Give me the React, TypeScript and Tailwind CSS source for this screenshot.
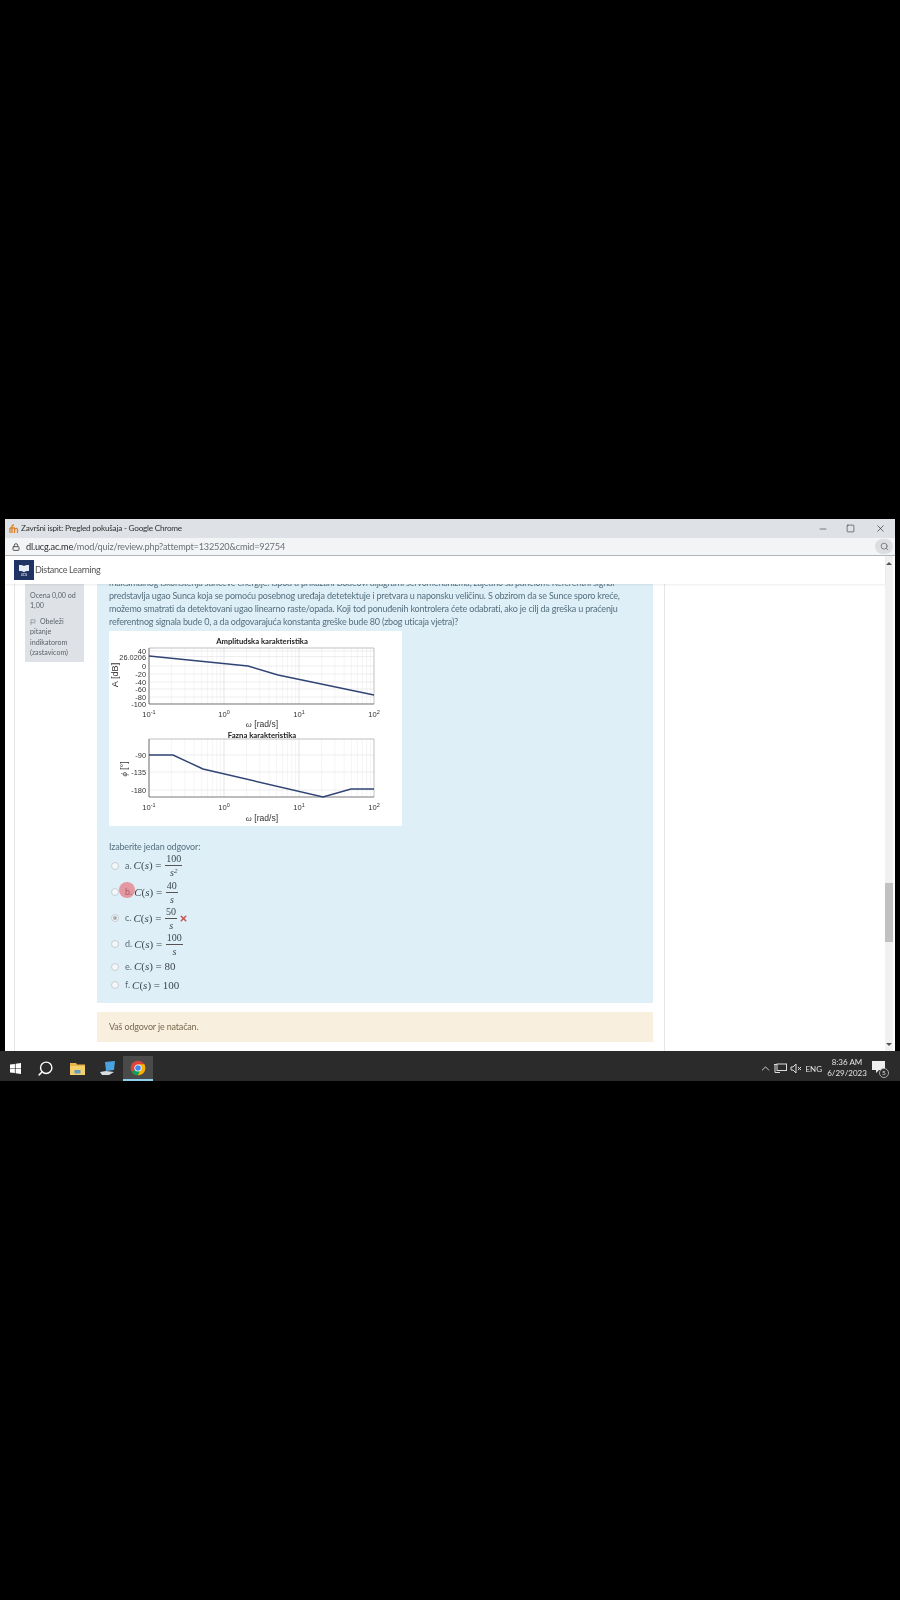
import React from "react";
import { Search, Lock, X, Minus, Square, ChevronUp, Flag } from "lucide-react";

const sans = "font-['Lato',sans-serif]";

function Frac({ n, d, sup }: { n: string; d: string; sup?: boolean }) {
  return (
    <span className="inline-flex flex-col items-center ml-[1px] mr-[4px] leading-[11px] text-[10px] text-[#3c464d]">
      <span className="px-[1px] border-b border-[#555] pb-[1px]">{n}</span>
      <span className="italic pt-[1px]">
        {d}
        {sup && <sup className="text-[7px] leading-none">2</sup>}
      </span>
    </span>
  );
}

function Radio({ checked }: { checked?: boolean }) {
  return (
    <span className="w-[8px] h-[8px] rounded-full border border-[#c9ced2] bg-[#f4f7f9] flex items-center justify-center mr-[6px] shrink-0">
      {checked && <span className="w-[4px] h-[4px] rounded-full bg-[#a9b0b5]" />}
    </span>
  );
}

function Option({ letter, eq, frac, wrong, h, checked }: { letter: string; eq: string; frac?: { n: string; d: string; sup?: boolean }; wrong?: boolean; h: string; checked?: boolean }) {
  return (
    <div className={`flex items-center pl-[2px] text-[#5d6b72] ${h}`}>
      <Radio checked={checked} />
      <span className="text-[9px] mr-[2px]">{letter}.</span>
      <span className="font-['Liberation_Serif',serif] text-[11px] flex items-center text-[#3c464d]">
        <span className="italic">C</span>(<span className="italic">s</span>)&nbsp;=&nbsp;{eq}
        {frac && <Frac {...frac} />}
      </span>
      {wrong && <X size={9} strokeWidth={4} className="text-[#c9504f] -ml-[2px]" />}
    </div>
  );
}

const decades = [0, 1, 2];
const logs = [1, 2, 3, 4, 5, 6, 7, 8, 9];
const xMinor: number[] = [];
decades.forEach((d) => logs.forEach((m) => xMinor.push(40 + 75 * (d + Math.log10(m)))));

function Axes({ top, bottom, yTicks, path }: { top: number; bottom: number; yTicks: { y: number; t: string }[]; path: string }) {
  return (
    <g>
      {xMinor.map((x, i) => (
        <line key={i} x1={x} x2={x} y1={top} y2={bottom} stroke={i % 9 === 0 ? "#d4d4d4" : "#eeeeee"} strokeWidth="0.6" />
      ))}
      {yTicks.map((k) => (
        <line key={k.t} x1="40" x2="265" y1={k.y} y2={k.y} stroke="#e2e2e2" strokeWidth="0.6" />
      ))}
      <path d={`M40 ${top}H265V${bottom}`} fill="none" stroke="#999" strokeWidth="0.6" />
      <path d={`M40 ${top}V${bottom}H265`} fill="none" stroke="#444" strokeWidth="0.7" />
      <polyline points={path} fill="none" stroke="#2f4474" strokeWidth="1.4" />
      {yTicks.map((k) => (
        <text key={k.t} x="37" y={k.y + 3} textAnchor="end" fontSize="7.4" fill="#333">{k.t}</text>
      ))}
      {[0, 1, 2, 3].map((d) => (
        <text key={d} x={40 + 75 * d} y={bottom + 13} textAnchor="middle" fontSize="7.6" fill="#333">
          10<tspan fontSize="5.5" dy="-3">{d === 0 ? "-1" : d - 1}</tspan>
        </text>
      ))}
    </g>
  );
}

function Chart() {
  return (
    <svg width="293" height="195" viewBox="0 0 293 195" className="bg-white block font-['Liberation_Sans',sans-serif]">
      <text x="153" y="13" textAnchor="middle" fontSize="7.7" fontWeight="bold" fill="#222" fontFamily="Lato">Amplitudska karakteristika</text>
      <Axes
        top={17}
        bottom={73}
        path="40,25 139,35 169,44 265,64"
        yTicks={[
          { y: 20, t: "40" },
          { y: 25.5, t: "26.0206" },
          { y: 35, t: "0" },
          { y: 43, t: "-20" },
          { y: 51, t: "-40" },
          { y: 58, t: "-60" },
          { y: 66, t: "-80" },
          { y: 73, t: "-100" },
        ]}
      />
      <text x="0" y="0" transform="translate(9,44) rotate(-90)" textAnchor="middle" fontSize="9.2" fill="#333">A [dB]</text>
      <text x="153" y="96" textAnchor="middle" fontSize="8.6" fill="#333"><tspan fontFamily="Liberation Serif" fontStyle="italic">ω</tspan> [rad/s]</text>
      <text x="153" y="107" textAnchor="middle" fontSize="7.7" fontWeight="bold" fill="#222" fontFamily="Lato">Fazna karakteristika</text>
      <Axes
        top={108}
        bottom={166}
        path="40,124 64,124 94,138 214,166 242,158 265,158"
        yTicks={[
          { y: 124, t: "-90" },
          { y: 141, t: "-135" },
          { y: 159, t: "-180" },
        ]}
      />
      <text x="0" y="0" transform="translate(18,138) rotate(-90)" textAnchor="middle" fontSize="8.6" fill="#333"><tspan fontFamily="Liberation Serif" fontStyle="italic">ϕ</tspan> [°]</text>
      <text x="153" y="190" textAnchor="middle" fontSize="8.6" fill="#333"><tspan fontFamily="Liberation Serif" fontStyle="italic">ω</tspan> [rad/s]</text>
    </svg>
  );
}

function Chrome() {
  return (
    <svg width="16" height="16" viewBox="0 0 24 24">
      <circle cx="12" cy="12" r="11" fill="#db4437" />
      <path d="M12 12 L2.5 17.5 A11 11 0 0 0 12 23 L21.5 17.5Z" fill="#0f9d58" />
      <path d="M12 23 A11 11 0 0 0 21.5 6.5 L12 6.5 L16 13Z" fill="#f4b400" />
      <circle cx="12" cy="12" r="5.4" fill="#fff" />
      <circle cx="12" cy="12" r="4.2" fill="#4285f4" />
    </svg>
  );
}

const lines = [
  "maksimalnog iskorištenja sunčeve energije. Ispod u prikazani Bodeovi dijagrami servomehanizma, zajedno sa panelom. Referentni signal",
  "predstavlja ugao Sunca koja se pomoću posebnog uređaja detetektuje i pretvara u naponsku veličinu. S obzirom da se Sunce sporo kreće,",
  "možemo smatrati da detektovani ugao linearno raste/opada. Koji tod ponuđenih kontrolera ćete odabrati, ako je cilj da greška u praćenju",
  "referentnog signala bude 0, a da odgovarajuća konstanta greške bude 80 (zbog uticaja vjetra)?",
];

export default function App() {
  return (
    <div className={`w-[900px] h-[1600px] bg-black pt-[519px] overflow-hidden ${sans}`}>
      <div className="blur-[0.4px]">
        <div className="ml-[5px] w-[890px] h-[532px] flex flex-col bg-white">
          {/* title bar */}
          <div className="h-[19px] bg-[#dee1e6] flex items-center text-[#333]">
            <svg width="10" height="10" viewBox="0 0 10 10" className="ml-[4px] mr-[1px]">
              <path d="M1 9V4M1 4h5M3 9V2.5Q3 1 5 1M5.5 9V5M5.5 5.5Q8.5 3 8.5 6V9" stroke="#d9822b" strokeWidth="1.3" fill="none" />
            </svg>
            <span className="text-[8.2px] tracking-[-0.23px] ml-[1px]">Završni ispit: Pregled pokušaja - Google Chrome</span>
            <div className="ml-auto flex items-center">
              <Minus size={10} strokeWidth={1.4} className="mr-[18px] text-[#333]" />
              <Square size={9} strokeWidth={1.6} className="mr-[20px] text-[#333]" />
              <X size={11} strokeWidth={1.5} className="mr-[9px] text-[#333]" />
            </div>
          </div>
          {/* address bar */}
          <div className="h-[18px] bg-[#f3f4f6] border-b border-[#b4b6b8] flex items-center">
            <Lock size={8} strokeWidth={3} className="ml-[7px] text-[#555]" />
            <span className="text-[9.2px] tracking-[-0.2px] ml-[6px] text-[#6b7177]"><span className="text-[#2a2d30]">dl.ucg.ac.me</span>/mod/quiz/review.php?attempt=132520&amp;cmid=92754</span>
            <span className="ml-auto mr-[2px] w-[18px] h-[15px] rounded-full bg-[#dcdee1] flex items-center justify-center">
              <Search size={9} className="text-[#666]" />
            </span>
          </div>
          {/* body */}
          <div className="flex-1 flex min-h-0">
            <div className="flex-1 flex flex-col min-w-0 relative">
              <div className="h-[28px] bg-white shadow-[0_1px_2px_rgba(0,0,0,0.08)] flex items-center relative z-10 shrink-0">
                <div className="ml-[9px] w-[20px] h-[20px] bg-[#1f3462] flex flex-col items-center justify-center">
                  <svg width="12" height="9" viewBox="0 0 12 9"><path d="M6 2Q4 .5 1 1v6q3-.5 5 1.2Q8 6.5 11 7V1Q8 .5 6 2Z" fill="#e8edf5" /></svg>
                  <span className="text-[3px] leading-[4px] text-white">UCG</span>
                </div>
                <span className="text-[9px] tracking-[-0.3px] text-[#555] ml-[1px]">Distance Learning</span>
              </div>
              <div className="flex-1 min-h-0 overflow-hidden">
                <div className="ml-[9px] w-[651px] h-full border-x border-[#e4e6e8] flex">
                  {/* sidebar */}
                  <div className="ml-[10px] w-[59px] h-[78px] bg-[#dee2e6] pl-[5px] pr-[3px] pt-[7px] text-[7.1px] leading-[10.4px] text-[#5b6368] shrink-0">
                    <div>Ocena 0,00 od 1,00</div>
                    <div className="mt-[5px]">
                      <Flag size={6} className="inline mr-[4px]" />Obeleži pitanje indikatorom (zastavicom)
                    </div>
                  </div>
                  {/* main */}
                  <div className="ml-[13px] w-[556px]">
                    <div className="bg-[#dfeff7] h-[419px] px-[12px] relative flow-root">
                      <div className="text-[9px] tracking-[-0.19px] leading-[13px] text-[#55707f] -mt-[8px] whitespace-nowrap">
                        {lines.map((l) => (
                          <div key={l}>{l}</div>
                        ))}
                      </div>
                      <div className="mt-[3px]">
                        <Chart />
                      </div>
                      <div className="text-[9px] tracking-[-0.16px] h-[13px] leading-[13px] text-[#55707f] mt-[14px] -mb-[1px]">Izaberite jedan odgovor:</div>
                      <Option letter="a" eq="" frac={{ n: "100", d: "s", sup: true }} h="h-[27px]" />
                      <Option letter="b" eq="" frac={{ n: "40", d: "s" }} h="h-[26px]" />
                      <Option letter="c" eq="" frac={{ n: "50", d: "s" }} wrong checked h="h-[26px]" />
                      <Option letter="d" eq="" frac={{ n: "100", d: "s" }} h="h-[26px]" />
                      <Option letter="e" eq="80" h="h-[19px]" />
                      <Option letter="f" eq="100" h="h-[18px]" />
                      <span className="absolute left-[22px] top-[298px] w-[16px] h-[16px] rounded-full bg-[#e8505b]/55" />
                    </div>
                    <div className="mt-[9px] h-[30px] bg-[#f8efdf] px-[12px] flex items-center text-[9px] tracking-[-0.16px] text-[#7a6a4f]">Vaš odgovor je natačan.</div>
                  </div>
                </div>
              </div>
            </div>
            {/* scrollbar */}
            <div className="w-[8px] mr-[2px] bg-[#f1f1f1] flex flex-col items-center">
              <span className="mt-[6px] border-x-[3px] border-x-transparent border-b-[3px] border-b-[#555]" />
              <span className="w-[8px] h-[59px] bg-[#c1c1c1] mt-[318px] shrink-0" />
              <span className="mt-auto mb-[5px] border-x-[3px] border-x-transparent border-t-[3px] border-t-[#555]" />
            </div>
          </div>
        </div>
        {/* taskbar */}
        <div className="h-[30px] pt-[5px] bg-[#2b2b2b] flex items-center text-[#e4e4e4]">
          <svg width="11" height="11" viewBox="0 0 11 11" className="ml-[10px]" fill="#fff">
            <path d="M0 1.6 4.9.9V5.2H0ZM5.6.8 11 0V5.2H5.6ZM0 5.8H4.9V10.1L0 9.4ZM5.6 5.8H11V11L5.6 10.2Z" />
          </svg>
          <Search size={17} strokeWidth={2} className="ml-[16px] text-white -scale-x-100" />
          <svg width="15" height="13" viewBox="0 0 15 13" className="ml-[16px]">
            <path d="M0 1h6l1 1.5h8V13H0Z" fill="#e9b44c" />
            <rect x="0" y="4" width="15" height="9" fill="#f5cf6b" />
            <rect x="4.5" y="8" width="6" height="3.5" fill="#5f9fc4" />
          </svg>
          <svg width="16" height="15" viewBox="0 0 16 15" className="ml-[15px]">
            <path d="M5 1 15 0 14 9 6 10Z" fill="#4aa3e0" />
            <path d="M0 11 6 10 14 11 9 14H2Z" fill="#d9dde0" />
          </svg>
          <div className="ml-[7px] w-[30px] h-[25px] bg-[#4a4a4a] border-b-2 border-[#8fd0ee] flex items-center justify-center">
            <Chrome />
          </div>
          <div className="ml-auto flex items-center">
            <ChevronUp size={13} strokeWidth={1.6} />
            <svg width="13" height="11" viewBox="0 0 13 11" className="ml-[2px]" fill="none" stroke="#ddd">
              <rect x="3" y="1" width="9.5" height="6.5" />
              <path d="M0 1.5h3M1 1.5v8h5" />
            </svg>
            <svg width="12" height="11" viewBox="0 0 12 11" fill="none" stroke="#ddd" className="ml-[3px]">
              <path d="M1 4h2l3-3v9L3 7H1ZM8 4l3 3M11 4 8 7" />
            </svg>
            <span className="text-[8px] ml-[3px]">ENG</span>
            <div className="ml-[3px] w-[44px] text-center text-[8px] leading-[11px] -mt-[2px]">
              <div>8:36 AM</div>
              <div>6/29/2023</div>
            </div>
            <div className="ml-[3px] mr-[12px] relative w-[16px] h-[16px]">
              <svg width="13" height="12" viewBox="0 0 13 12"><path d="M0 0H13V9H7L4 12V9H0Z" fill="#eee" /></svg>
              <span className="absolute -right-[1px] -bottom-[1px] w-[10px] h-[10px] rounded-full border border-[#aaa] bg-[#2b2b2b] text-[6.5px] leading-[8px] text-center">5</span>
            </div>
          </div>
        </div>
      </div>
    </div>
  );
}
